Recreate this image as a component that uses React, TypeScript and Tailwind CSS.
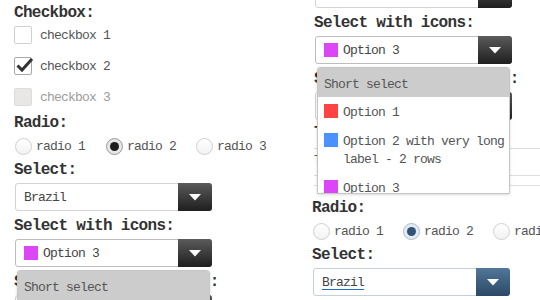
import React from "react";

type Theme = "dark" | "blue";

const Heading: React.FC<{ children: React.ReactNode; className?: string }> = ({
  children,
  className = "",
}) => (
  <div
    className={`h-[20px] leading-[20px] text-[16px] font-bold tracking-[-0.7px] text-[#333] whitespace-nowrap ${className}`}
  >
    {children}
  </div>
);

const Caret = () => (
  <svg width="12" height="7" viewBox="0 0 12 7">
    <path d="M0 0 H12 L6 6.5 Z" fill="#fff" />
  </svg>
);

const Swatch: React.FC<{ color: string }> = ({ color }) => (
  <span className="block w-[14px] h-[14px] shrink-0" style={{ backgroundColor: color }} />
);

const CheckRow: React.FC<{ label: string; state: "off" | "on" | "disabled" }> = ({
  label,
  state,
}) => (
  <div className="flex items-center gap-[8px] h-[24px]">
    <span
      className={
        state === "disabled"
          ? "w-[18px] h-[18px] rounded-[2px] border border-[#dcdcdc] bg-[#e9e6e6]"
          : state === "on"
          ? "relative w-[18px] h-[18px] rounded-[2px] border border-[#a8a8a8] bg-white"
          : "w-[18px] h-[18px] rounded-[2px] border border-[#d0d0d0] bg-white"
      }
    >
      {state === "on" && (
        <svg width="20" height="18" viewBox="0 0 20 18" className="absolute left-[0px] top-[-2px]">
          <path d="M2.5 9.5 L7 14 L17 3" fill="none" stroke="#333" strokeWidth="3" />
        </svg>
      )}
    </span>
    <span className={`pt-[1px] ${state === "disabled" ? "text-[#9a9a9a]" : "text-[#555]"}`}>
      {label}
    </span>
  </div>
);

const Radio: React.FC<{ label: string; checked?: boolean; theme?: Theme; width: string }> = ({
  label,
  checked,
  theme = "dark",
  width,
}) => (
  <div className={`flex items-center gap-[4px] shrink-0 ${width}`}>
    <span
      className={
        checked
          ? theme === "blue"
            ? "w-[17px] h-[17px] rounded-full border border-[#aebccb] bg-[#e4eaf0] flex items-center justify-center"
            : "w-[17px] h-[17px] rounded-full border border-[#9a9a9a] bg-[#e6e6e6] flex items-center justify-center"
          : "w-[17px] h-[17px] rounded-full border border-[#cfcfcf] bg-linear-to-b from-white to-[#f2f2f2]"
      }
    >
      {checked && (
        <span
          className={
            theme === "blue"
              ? "w-[9px] h-[9px] rounded-full bg-[#2f5374]"
              : "w-[9px] h-[9px] rounded-full bg-[#1e1e1e]"
          }
        />
      )}
    </span>
    <span className="pt-[1px] text-[#555] whitespace-nowrap">{label}</span>
  </div>
);

const Dropdown = () => (
  <div className="absolute top-[31px] left-[2px] w-[193px] max-h-[127px] overflow-hidden z-10 bg-white border border-[#c6c6c6] rounded-t-[3px] shadow-[0_1px_3px_rgba(0,0,0,0.15)]">
    <div className="h-[29px] leading-[29px] pt-[2px] pl-[6px] bg-[#cccccc] text-[#555]">
      Short select
    </div>
    <div className="flex items-start gap-[5px] px-[6px] pt-[6px] pb-[4px] leading-[18px] text-[#555]">
      <span className="mt-[1px]">
        <Swatch color="#ff4343" />
      </span>
      <span className="pt-[1px]">Option 1</span>
    </div>
    <div className="flex items-start gap-[5px] px-[6px] pt-[6px] pb-[4px] leading-[18px] text-[#555]">
      <span className="mt-[1px]">
        <Swatch color="#4a92ff" />
      </span>
      <span className="pt-[1px] whitespace-nowrap">
        Option 2 with very long
        <br />
        label - 2 rows
      </span>
    </div>
    <div className="flex items-start gap-[5px] px-[6px] pt-[6px] pb-[4px] leading-[18px] text-[#555]">
      <span className="mt-[1px]">
        <Swatch color="#dd46f6" />
      </span>
      <span className="pt-[1px]">Option 3</span>
    </div>
  </div>
);

const Select: React.FC<{
  value: string;
  icon?: string;
  theme?: Theme;
  underline?: boolean;
  open?: boolean;
  className?: string;
}> = ({ value, icon, theme = "dark", underline, open, className = "" }) => (
  <div className={`relative ml-[1px] w-[197px] h-[28px] ${className}`}>
    <div
      className={`flex h-full rounded-[3px] border bg-white ${
        icon ? "border-[#bdbdbd]" : theme === "blue" ? "border-[#c5d0da]" : "border-[#d2d2d2]"
      }`}
    >
      <div className="flex-1 flex items-center gap-[5px] pl-[8px] text-[#444]">
        {icon && <Swatch color={icon} />}
        <span
          className={`pt-[2px] ${
            underline ? "underline decoration-[#1f6fc7] underline-offset-[3px]" : ""
          }`}
        >
          {value}
        </span>
      </div>
      <div
        className={`-my-px -mr-px w-[34px] flex items-center justify-center rounded-r-[3px] ${
          theme === "blue"
            ? "bg-linear-to-b from-[#52779a] to-[#2b4965]"
            : "bg-linear-to-b from-[#5c5c5c] to-[#1f1f1f]"
        }`}
      >
        <Caret />
      </div>
    </div>
    {open && <Dropdown />}
  </div>
);

const FormTop = () => (
  <>
    <Heading>Checkbox:</Heading>
    <CheckRow label="checkbox 1" state="off" />
    <div className="mt-[7px]">
      <CheckRow label="checkbox 2" state="on" />
    </div>
    <div className="mt-[7px]">
      <CheckRow label="checkbox 3" state="disabled" />
    </div>
    <Heading className="mt-[4px]">Radio:</Heading>
    <div className="mt-[4px] h-[18px] flex items-center ml-[1px]">
      <Radio label="radio 1" width="w-[91px]" />
      <Radio label="radio 2" checked width="w-[90px]" />
      <Radio label="radio 3" width="w-[90px]" />
    </div>
    <Heading className="mt-[5px]">Select:</Heading>
    <Select value="Brazil" className="mt-[3px]" />
    <Heading className="mt-[5px]">Select with icons:</Heading>
    <Select value="Option 3" icon="#dd46f6" open className="mt-[3px] z-10" />
    <Heading className="mt-[5px]">Select with scroll bar:</Heading>
    <Select value="Option 1" className="mt-[3px]" />
  </>
);

const App: React.FC = () => {
  return (
    <div className="w-[540px] h-[300px] overflow-hidden bg-white flex items-start [font-family:'Liberation_Mono',monospace] text-[13px] tracking-[-0.8px]">
      {/* left column */}
      <div className="w-[300px] shrink-0 pl-[14px] pt-[3px] flex flex-col">
        <FormTop />
      </div>

      {/* right column, scrolled further down */}
      <div className="w-[300px] shrink-0 pl-[14px] mt-[-200px] flex flex-col">
        <FormTop />
        <Heading className="mt-[3px]">Text input:</Heading>
        <div className="mt-[5px] border-t border-[#dedede]" />
        <div className="mt-[3px] h-[18px] leading-[18px] text-[#555]">Text</div>
        <div className="mt-[5px] border-t border-[#dedede]" />
        <div className="mt-[9px] border-t border-[#dedede]" />

        <div className="ml-[-2px] flex flex-col">
          <Heading className="mt-[12px]">Radio:</Heading>
          <div className="mt-[4px] h-[18px] flex items-center ml-[1px]">
            <Radio label="radio 1" width="w-[90px]" theme="blue" />
            <Radio label="radio 2" checked width="w-[90px]" theme="blue" />
            <Radio label="radio 3" width="w-[90px]" theme="blue" />
          </div>
          <Heading className="mt-[5px]">Select:</Heading>
          <Select value="Brazil" theme="blue" underline className="mt-[3px]" />
        </div>
      </div>
    </div>
  );
};

export default App;
